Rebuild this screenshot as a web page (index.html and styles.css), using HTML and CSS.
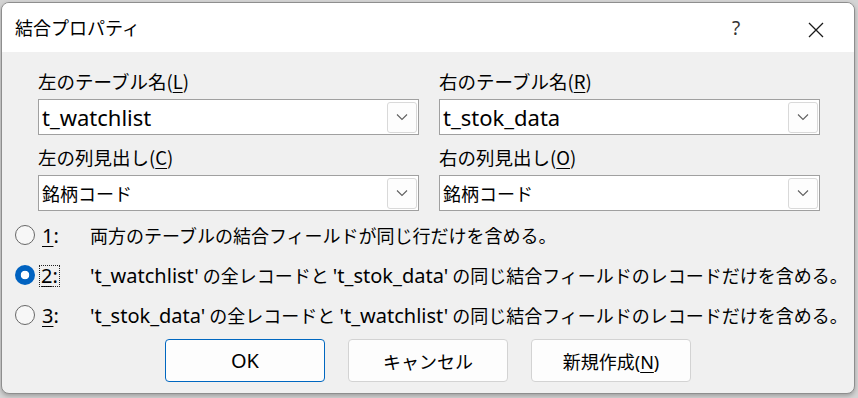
FILE: index.html
```html
<!DOCTYPE html>
<html lang="ja">
<head>
    <meta charset="UTF-8">
    <title>結合プロパティ</title>
    <link rel="stylesheet" href="styles.css">
</head>
<body>
    <div class="dialog">
        <div class="titlebar">
            <div class="title">結合プロパティ</div>
            <div class="title-help">?</div>
            <div class="title-close">
                <svg width="16" height="16" viewBox="0 0 16 16"><path d="M1 1 L15 15 M15 1 L1 15" stroke="#1a1a1a" stroke-width="1.3" fill="none"/></svg>
            </div>
        </div>

        <div class="content">
            <div class="fields">
                <div class="field">
                    <div class="label">左のテーブル名(<u>L</u>)</div>
                    <div class="combo">
                        <span class="combo-value lat">t_watchlist</span>
                        <span class="combo-btn"><svg width="12" height="8" viewBox="0 0 12 8"><path d="M1 1.5 L6 6.5 L11 1.5" stroke="#5f5f5f" stroke-width="1.1" fill="none"/></svg></span>
                    </div>
                </div>
                <div class="field">
                    <div class="label">右のテーブル名(<u>R</u>)</div>
                    <div class="combo">
                        <span class="combo-value lat">t_stok_data</span>
                        <span class="combo-btn"><svg width="12" height="8" viewBox="0 0 12 8"><path d="M1 1.5 L6 6.5 L11 1.5" stroke="#5f5f5f" stroke-width="1.1" fill="none"/></svg></span>
                    </div>
                </div>
                <div class="field">
                    <div class="label">左の列見出し(<u>C</u>)</div>
                    <div class="combo">
                        <span class="combo-value">銘柄コード</span>
                        <span class="combo-btn"><svg width="12" height="8" viewBox="0 0 12 8"><path d="M1 1.5 L6 6.5 L11 1.5" stroke="#5f5f5f" stroke-width="1.1" fill="none"/></svg></span>
                    </div>
                </div>
                <div class="field">
                    <div class="label">右の列見出し(<u>O</u>)</div>
                    <div class="combo">
                        <span class="combo-value">銘柄コード</span>
                        <span class="combo-btn"><svg width="12" height="8" viewBox="0 0 12 8"><path d="M1 1.5 L6 6.5 L11 1.5" stroke="#5f5f5f" stroke-width="1.1" fill="none"/></svg></span>
                    </div>
                </div>
            </div>

            <div class="options">
                <div class="option">
                    <span class="radio"></span>
                    <span class="key"><u>1</u>:</span>
                    <span class="desc">両方のテーブルの結合フィールドが同じ行だけを含める。</span>
                </div>
                <div class="option">
                    <span class="radio checked"></span>
                    <span class="key"><span class="focus"><u>2</u>:</span></span>
                    <span class="desc"><span class="lat">'t_watchlist'</span> の全レコードと <span class="lat">'t_stok_data'</span> の同じ結合フィールドのレコードだけを含める。</span>
                </div>
                <div class="option">
                    <span class="radio"></span>
                    <span class="key"><u>3</u>:</span>
                    <span class="desc"><span class="lat">'t_stok_data'</span> の全レコードと <span class="lat">'t_watchlist'</span> の同じ結合フィールドのレコードだけを含める。</span>
                </div>
            </div>

            <div class="buttons">
                <button class="btn btn-default">OK</button>
                <button class="btn">キャンセル</button>
                <button class="btn">新規作成(<u>N</u>)</button>
            </div>
        </div>
    </div>
</body>
</html>
```

FILE: styles.css
```css
body {
    margin: 0;
    background: #d4d4d4;
    font-family: "Noto Sans", "Noto Sans CJK JP", sans-serif;
    font-size: 18px;
    color: #000;
}

.dialog {
    margin: 2px 3px 4px 1px;
    height: 390px;
    border: 1px solid #8e8e8e;
    border-radius: 8px;
    overflow: hidden;
    background: #f0f0f0;
    display: flex;
    flex-direction: column;
    box-shadow: 0 2px 4px rgba(0, 0, 0, 0.25);
}

/* タイトルバー */
.titlebar {
    height: 49px;
    background: #fff;
    display: flex;
    align-items: center;
    padding-left: 13px;
}

.title {
    flex: 1;
    font-family: "Noto Sans CJK JP", sans-serif;
    font-size: 18px;
    margin-top: -1px;
}

.title-help {
    width: 16px;
    margin-right: 60px;
    font-size: 19px;
    color: #333;
}

.title-close {
    width: 16px;
    height: 16px;
    margin-right: 30px;
    margin-top: -2px;
}

/* 入力欄 */
.content {
    padding: 11px 34px 0 13px;
}

.fields {
    display: grid;
    grid-template-columns: 381px 381px;
    column-gap: 20px;
    padding-left: 23px;
}

.field:nth-child(n+3) .label {
    margin-top: 4px;
}

.label {
    height: 36px;
    line-height: 36px;
    font-family: "Noto Sans CJK JP", sans-serif;
    font-size: 18.5px;
}

u {
    text-decoration-thickness: 1px;
    text-underline-offset: 3px;
}

.combo {
    height: 34px;
    border: 1px solid #a0a0a0;
    background: #fff;
    display: flex;
    align-items: center;
    justify-content: space-between;
}

.combo-value {
    padding-left: 3px;
    font-family: "Noto Sans CJK JP", sans-serif;
}

.combo-value.lat {
    font-family: "Noto Sans", sans-serif;
    font-size: 22px;
}

.lat {
    font-family: "Noto Sans", sans-serif;
    font-size: 20px;
}

.combo-btn {
    width: 28px;
    height: 29px;
    margin-right: 1px;
    border: 1px solid #d9d9d9;
    border-radius: 3px;
    background: #fdfdfd;
    display: flex;
    align-items: center;
    justify-content: center;
}

/* オプション */
.options {
    margin-top: 4px;
}

.option {
    height: 40px;
    display: flex;
    align-items: center;
}

.radio {
    width: 18px;
    height: 18px;
    border: 1px solid #676767;
    border-radius: 50%;
    background: #f7f7f7;
    margin-right: 7px;
    flex: none;
}

.radio.checked {
    width: 20px;
    height: 20px;
    border: none;
    background: radial-gradient(circle, #fff 0 4px, #0062c0 4.6px);
}

.key {
    width: 48px;
    flex: none;
    font-size: 20px;
    font-family: "Noto Sans", sans-serif;
}

.focus {
    display: inline-block;
    outline: 1px dotted #222;
    padding: 0 1px;
    margin-left: -2px;
    line-height: 20px;
}

.desc {
    font-family: "Noto Sans CJK JP", sans-serif;
    white-space: nowrap;
}

/* ボタン */
.buttons {
    margin-top: 4px;
    padding-left: 150px;
    display: flex;
    gap: 23px;
}

.btn {
    width: 160px;
    height: 43px;
    border: 1px solid #d3d3d3;
    border-radius: 4px;
    background: #fdfdfd;
    font-family: "Noto Sans", "Noto Sans CJK JP", sans-serif;
    font-size: 18px;
    color: #000;
    padding: 0;
}

.btn-default {
    border-color: #0067c0;
    font-size: 20px;
}
```
